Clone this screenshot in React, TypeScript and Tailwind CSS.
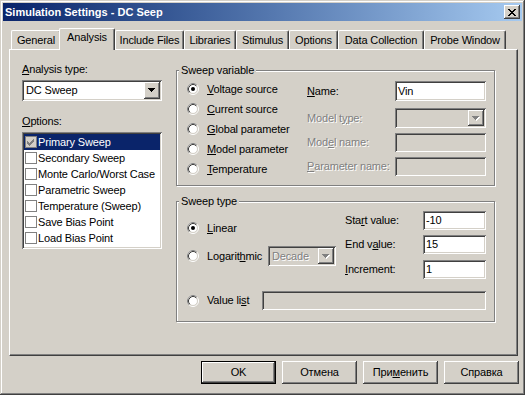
import React from 'react';

// classic Windows 2000 bevels
const raised = 'shadow-[inset_-1px_-1px_#404040,inset_1px_1px_#ffffff,inset_-2px_-2px_#808080]';
const sunken = 'shadow-[inset_1px_1px_#808080,inset_-1px_-1px_#ffffff,inset_2px_2px_#404040,inset_-2px_-2px_#d4d0c8]';
const winFrame = 'shadow-[inset_-1px_-1px_#404040,inset_1px_1px_#d4d0c8,inset_-2px_-2px_#808080,inset_2px_2px_#ffffff]';
const disabledText = 'text-[#808080] [text-shadow:1px_1px_0_#ffffff]';

const tabs = [
  { label: 'General', w: 'w-[50px]' },
  { label: 'Analysis', w: 'w-[56px]', active: true },
  { label: 'Include Files', w: 'w-[69px]' },
  { label: 'Libraries', w: 'w-[52px]' },
  { label: 'Stimulus', w: 'w-[53px]' },
  { label: 'Options', w: 'w-[49px]' },
  { label: 'Data Collection', w: 'w-[86px]' },
  { label: 'Probe Window', w: 'w-[82px]' },
];

const options = [
  'Primary Sweep',
  'Secondary Sweep',
  'Monte Carlo/Worst Case',
  'Parametric Sweep',
  'Temperature (Sweep)',
  'Save Bias Point',
  'Load Bias Point',
];

const Radio = ({ checked }: { checked?: boolean }) => (
  <svg width="12" height="12" viewBox="0 0 12 12" className="shrink-0">
    <circle cx="6" cy="6" r="5.5" fill="none" stroke="#ffffff" />
    <path d="M2.11 9.89A5.5 5.5 0 0 1 9.89 2.11" fill="none" stroke="#808080" />
    <circle cx="6" cy="6" r="4.5" fill="#ffffff" stroke="#d4d0c8" />
    <path d="M2.82 9.18A4.5 4.5 0 0 1 9.18 2.82" fill="none" stroke="#404040" />
    {checked && <circle cx="6" cy="6" r="2" fill="#000000" />}
  </svg>
);

const Arrow = ({ disabled }: { disabled?: boolean }) => {
  const rows = (dx: number, fill: string) => (
    <g fill={fill}>
      <rect x={0 + dx} y={0 + dx} width="7" height="1" />
      <rect x={1 + dx} y={1 + dx} width="5" height="1" />
      <rect x={2 + dx} y={2 + dx} width="3" height="1" />
      <rect x={3 + dx} y={3 + dx} width="1" height="1" />
    </g>
  );
  return (
    <svg width="8" height="5" viewBox="0 0 8 5" shapeRendering="crispEdges">
      {disabled && rows(1, '#ffffff')}
      {rows(0, disabled ? '#808080' : '#000000')}
    </svg>
  );
};

const Combo = ({ value, disabled, className }: { value?: string; disabled?: boolean; className: string }) => (
  <div className={`${className} ${sunken} ${disabled ? 'bg-[#d4d0c8]' : 'bg-white'} flex items-stretch p-[2px]`}>
    <span className={`flex-1 pl-[2px] flex items-center ${disabled ? disabledText : ''}`}>{value}</span>
    <div className={`w-4 bg-[#d4d0c8] flex items-center justify-center ${raised}`}>
      <Arrow disabled={disabled} />
    </div>
  </div>
);

const Field = ({ value, disabled, className }: { value?: string; disabled?: boolean; className: string }) => (
  <div className={`${className} ${sunken} ${disabled ? 'bg-[#d4d0c8]' : 'bg-white'} flex items-center pl-[3px]`}>
    {value}
  </div>
);

const GroupBox = ({ title, h, children }: { title: string; h: string; children: React.ReactNode }) => (
  <div className={`relative w-[319px] ${h} border border-[#808080] shadow-[inset_1px_1px_#ffffff,1px_1px_#ffffff]`}>
    <span className="absolute -top-[7px] left-[2px] bg-[#d4d0c8] px-[2px]">{title}</span>
    {children}
  </div>
);

const RadioRow = ({ checked, children, className = '' }: { checked?: boolean; children: React.ReactNode; className?: string }) => (
  <div className={`h-5 flex items-center gap-[8px] ${className}`}>
    <Radio checked={checked} />
    {children}
  </div>
);

const Button = ({ children, isDefault }: { children: React.ReactNode; isDefault?: boolean }) => (
  <div
    className={`w-[75px] h-[23px] flex items-center justify-center bg-[#d4d0c8] ${raised} ${
      isDefault ? 'border border-black' : ''
    }`}
  >
    {children}
  </div>
);

export default function App() {
  return (
    <div className="w-[528px] h-[397px] bg-white font-['Liberation_Sans',Arial,sans-serif] text-[11px] leading-[13px] tracking-[-0.15px] text-black">
      <div className={`w-[525px] h-[395px] bg-[#d4d0c8] p-[3px] flex flex-col ${winFrame}`}>
        {/* Title bar */}
        <div className="h-[18px] flex items-center justify-between bg-linear-to-r from-[#0a246a] to-[#a6caf0] pl-[2px] pr-[2px]">
          <span className="font-bold text-white tracking-normal">Simulation Settings - DC Seep</span>
          <div className={`w-4 h-[14px] bg-[#d4d0c8] flex items-center justify-center ${raised}`}>
            <svg width="8" height="7" viewBox="0 0 8 7" shapeRendering="crispEdges">
              <path
                d="M0 0h2v1h-2zM6 0h2v1h-2zM1 1h2v1h-2zM5 1h2v1h-2zM2 2h4v1h-4zM3 3h2v1h-2zM2 4h4v1h-4zM1 5h2v1h-2zM5 5h2v1h-2zM0 6h2v1h-2zM6 6h2v1h-2z"
                fill="#000000"
              />
            </svg>
          </div>
        </div>

        {/* Tabs */}
        <div className="mt-[7px] h-[21px] flex items-end pl-[8px]">
          {tabs.map((t) =>
            t.active ? (
              <div
                key={t.label}
                className={`${t.w} relative z-10 -ml-[2px] -mb-px h-[22px] bg-[#d4d0c8] border-t border-l border-white border-r border-r-[#404040] shadow-[inset_-1px_0_#808080] rounded-t-[2px] flex justify-center pt-[2px]`}
              >
                {t.label}
              </div>
            ) : (
              <div
                key={t.label}
                className={`${t.w} h-[19px] border-t border-l border-white border-r border-r-[#404040] shadow-[inset_-1px_0_#808080] rounded-t-[2px] flex justify-center pt-[3px]`}
              >
                {t.label}
              </div>
            )
          )}
        </div>

        {/* Panel */}
        <div className="ml-[6px] w-[509px] h-[307px] border-t border-l border-white border-r border-b border-r-[#404040] border-b-[#404040] shadow-[inset_-1px_-1px_#808080] flex pl-[12px]">
          {/* Left column */}
          <div className="w-[140px] pt-[13px] flex flex-col">
            <div>
              <u>A</u>nalysis type:
            </div>
            <Combo value="DC Sweep" className="mt-[4px] w-[140px] h-[21px]" />
            <div className="mt-[14px]">
              <u>O</u>ptions:
            </div>
            <div className={`mt-[4px] w-[140px] h-[117px] bg-white ${sunken} p-[2px]`}>
              {options.map((o, i) => (
                <div key={o} className={`h-4 flex items-center pl-px ${i === 0 ? 'bg-[#0a246a] text-white' : ''}`}>
                  <div
                    className={`w-[12px] h-[12px] border border-[#808080] flex items-center justify-center ${
                      i === 0 ? 'bg-[#d4d0c8]' : 'bg-white'
                    }`}
                  >
                    {i === 0 && (
                      <svg width="8" height="7" viewBox="0 0 8 7" shapeRendering="crispEdges">
                        <path d="M0 2h1v1h1v1h1v-1h1v-1h1v-1h1v-1h1v3h-1v1h-1v1h-1v1h-1v1h-1v-1h-1v-1h-1v-1h-1z" fill="#808080" />
                      </svg>
                    )}
                  </div>
                  <span className="ml-px whitespace-nowrap">{o}</span>
                </div>
              ))}
            </div>
          </div>

          {/* Right column */}
          <div className="ml-[14px] pt-[20px] flex flex-col">
            <GroupBox title="Sweep variable" h="h-[116px]">
              <div className="flex">
                <div className="w-[130px] pl-[10px] pt-[8px] flex flex-col">
                  <RadioRow checked>
                    <span>
                      <u>V</u>oltage source
                    </span>
                  </RadioRow>
                  <RadioRow>
                    <span>
                      <u>C</u>urrent source
                    </span>
                  </RadioRow>
                  <RadioRow>
                    <span>
                      <u>G</u>lobal parameter
                    </span>
                  </RadioRow>
                  <RadioRow>
                    <span>
                      <u>M</u>odel parameter
                    </span>
                  </RadioRow>
                  <RadioRow>
                    <span>
                      <u>T</u>emperature
                    </span>
                  </RadioRow>
                </div>
                <div className="pt-[10px] flex flex-col">
                  <div className="flex items-center h-5">
                    <span className="w-[88px]">
                      <u>N</u>ame:
                    </span>
                    <Field value="Vin" className="w-[91px] h-5" />
                  </div>
                  <div className="flex items-center h-5 mt-[7px]">
                    <span className={`w-[88px] ${disabledText}`}>
                      Model t<u>y</u>pe:
                    </span>
                    <Combo disabled className="w-[91px] h-5" />
                  </div>
                  <div className="flex items-center h-[19px] mt-[5px]">
                    <span className={`w-[88px] ${disabledText}`}>
                      Mod<u>e</u>l name:
                    </span>
                    <Field disabled className="w-[91px] h-[19px]" />
                  </div>
                  <div className="flex items-center h-[19px] mt-[5px]">
                    <span className={`w-[88px] ${disabledText}`}>
                      <u>P</u>arameter name:
                    </span>
                    <Field disabled className="w-[91px] h-[19px]" />
                  </div>
                </div>
              </div>
            </GroupBox>

            <div className="mt-[15px]">
              <GroupBox title="Sweep type" h="h-[121px]">
                <div className="pl-[10px] pt-[9px] flex flex-col">
                  <div className="flex">
                    <div className="w-[158px] flex flex-col">
                      <RadioRow checked className="mt-[7px]">
                        <span>
                          <u>L</u>inear
                        </span>
                      </RadioRow>
                      <RadioRow className="mt-[8px]">
                        <span className="w-[61px]">
                          Logarit<u>h</u>mic
                        </span>
                        <Combo value="Decade" disabled className="-ml-[8px] w-[68px] h-5" />
                      </RadioRow>
                    </div>
                    <div className="flex flex-col">
                      <div className="flex items-center h-[19px]">
                        <span className="w-[78px]">
                          Sta<u>r</u>t value:
                        </span>
                        <Field value="-10" className="w-[63px] h-[19px]" />
                      </div>
                      <div className="flex items-center h-[19px] mt-[5px]">
                        <span className="w-[78px]">
                          End v<u>a</u>lue:
                        </span>
                        <Field value="15" className="w-[63px] h-[19px]" />
                      </div>
                      <div className="flex items-center h-[19px] mt-[6px]">
                        <span className="w-[78px]">
                          <u>I</u>ncrement:
                        </span>
                        <Field value="1" className="w-[63px] h-[19px]" />
                      </div>
                    </div>
                  </div>
                  <RadioRow className="mt-[12px] h-[19px]">
                    <span className="w-[55px]">
                      Value li<u>s</u>t
                    </span>
                    <Field disabled className="-ml-[8px] w-[224px] h-[19px]" />
                  </RadioRow>
                </div>
              </GroupBox>
            </div>
          </div>
        </div>

        {/* Dialog buttons */}
        <div className="mt-[5px] flex justify-end gap-[6px] mr-[3px]">
          <Button isDefault>OK</Button>
          <Button>Отмена</Button>
          <Button>
            При<u>м</u>енить
          </Button>
          <Button>Справка</Button>
        </div>
      </div>
    </div>
  );
}
